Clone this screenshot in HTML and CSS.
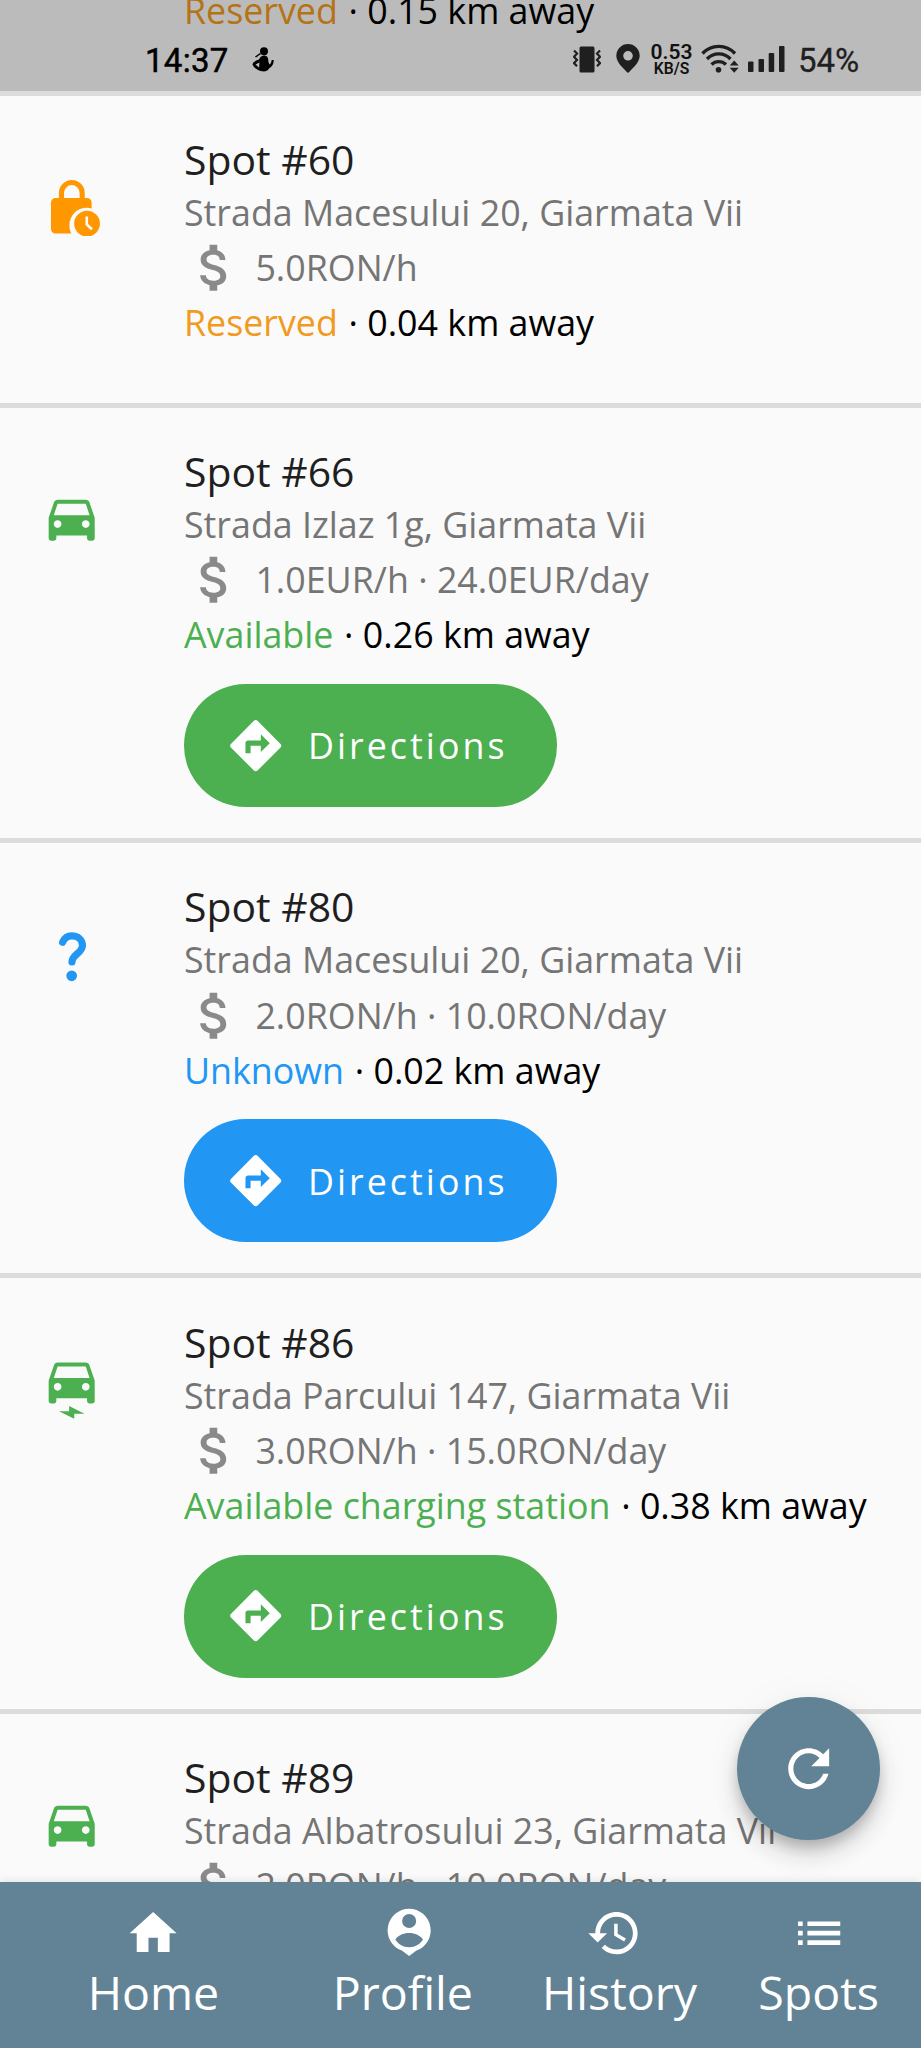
FILE: index.html
```html
<!DOCTYPE html>
<html lang="en">
<head>
<meta charset="utf-8">
<title>Parking spots</title>
<link rel="stylesheet" href="styles.css">
</head>
<body>
<svg class="defs" width="0" height="0" aria-hidden="true">
  <symbol id="car" viewBox="0 0 24 24"><path d="M18.92 6.01C18.72 5.42 18.16 5 17.5 5h-11c-.66 0-1.21.42-1.42 1.01L3 12v8c0 .55.45 1 1 1h1c.55 0 1-.45 1-1v-1h12v1c0 .55.45 1 1 1h1c.55 0 1-.45 1-1v-8l-2.08-5.99zM6.5 16c-.83 0-1.5-.67-1.5-1.5S5.67 13 6.5 13s1.5.67 1.5 1.5S7.33 16 6.5 16zm11 0c-.83 0-1.5-.67-1.5-1.5s.67-1.5 1.5-1.5 1.5.67 1.5 1.5-.67 1.5-1.5 1.5zM5 11l1.5-4.5h11L19 11H5z"/></symbol>
  <symbol id="ecar" viewBox="0 0 24 24"><path d="M18.92 2.01C18.72 1.42 18.16 1 17.5 1h-11c-.66 0-1.21.42-1.42 1.01L3 8v8c0 .55.45 1 1 1h1c.55 0 1-.45 1-1v-1h12v1c0 .55.45 1 1 1h1c.55 0 1-.45 1-1V8l-2.08-5.99zM6.5 12c-.83 0-1.5-.67-1.5-1.5S5.67 9 6.5 9 8 9.67 8 10.5 7.33 12 6.5 12zm11 0c-.83 0-1.5-.67-1.5-1.5S16.67 9 17.5 9s1.5.67 1.5 1.5-.67 1.5-1.5 1.5zM5 7l1.5-4.5h11L19 7H5zM7 20h4v-2l6 3h-4v2z"/></symbol>
  <symbol id="money" viewBox="0 0 24 24"><path d="M11.8 10.9c-2.27-.59-3-1.2-3-2.15 0-1.09 1.01-1.85 2.7-1.85 1.78 0 2.44.85 2.5 2.1h2.21c-.07-1.72-1.12-3.3-3.21-3.81V3h-3v2.16c-1.94.42-3.5 1.68-3.5 3.61 0 2.31 1.91 3.46 4.7 4.13 2.5.6 3 1.48 3 2.41 0 .69-.49 1.79-2.7 1.79-2.06 0-2.87-.92-2.98-2.1h-2.2c.12 2.19 1.76 3.42 3.68 3.83V21h3v-2.15c1.95-.37 3.5-1.5 3.5-3.55 0-2.84-2.43-3.81-4.7-4.4z"/></symbol>
  <symbol id="turn" viewBox="0 0 24 24"><path d="M21.71 11.29l-9-9c-.39-.39-1.02-.39-1.41 0l-9 9c-.39.39-.39 1.02 0 1.41l9 9c.39.39 1.02.39 1.41 0l9-9c.39-.38.39-1.01 0-1.41zM14 14.5V12h-4v3H8v-4c0-.55.45-1 1-1h5V7.5l3.5 3.5-3.5 3.5z"/></symbol>
</svg>

<main class="spots">
  <article class="spot spot-first">
    <div class="status"><span class="reserved">Reserved</span> · 0.15 km away</div>
  </article>

  <article class="spot spot-short">
    <svg class="spot-icon reserved" viewBox="0 0 24 24">
      <path fill-rule="evenodd" d="M19.8 13.1c-.7-.2-1.3-.3-1.9-.3a6.8 6.8 0 0 0-6.8 6.8c0 1.200.3 2.300.8 3.300H5.700a1.800 1.800 0 0 1-1.800-1.800V10.800A1.800 1.800 0 0 1 5.700 9h1.300V7a5.050 5.050 0 0 1 10.100 0v2h.9a1.800 1.800 0 0 1 1.800 1.800zM9 9h6.100V7A3.050 3.050 0 0 0 9 7z"/>
      <circle cx="18" cy="19" r="5.05"/>
      <path class="clock-hand" d="M17.900 16.200v3.100l2 1.900"/>
    </svg>
    <div class="info">
      <h2>Spot #60</h2>
      <p>Strada Macesului 20, Giarmata Vii</p>
      <p class="price"><svg><use href="#money"/></svg>5.0RON/h</p>
      <div class="status"><span class="reserved">Reserved</span> · 0.04 km away</div>
    </div>
  </article>

  <article class="spot">
    <svg class="spot-icon available"><use href="#car"/></svg>
    <div class="info">
      <h2>Spot #66</h2>
      <p>Strada Izlaz 1g, Giarmata Vii</p>
      <p class="price"><svg><use href="#money"/></svg>1.0EUR/h · 24.0EUR/day</p>
      <div class="status"><span class="available">Available</span> · 0.26 km away</div>
      <button class="go go-green"><svg><use href="#turn"/></svg>Directions</button>
    </div>
  </article>

  <article class="spot">
    <svg class="spot-icon unknown" viewBox="0 0 24 24">
      <path class="question" d="M8.450 7.900C9.200 6.300 10.400 5.450 12 5.450c2.500 0 4.200 1.500 4.200 3.700 0 3-4.100 3.500-4.100 6.500"/>
      <circle cx="12" cy="21.050" r="2.080"/>
    </svg>
    <div class="info">
      <h2>Spot #80</h2>
      <p>Strada Macesului 20, Giarmata Vii</p>
      <p class="price"><svg><use href="#money"/></svg>2.0RON/h · 10.0RON/day</p>
      <div class="status"><span class="unknown">Unknown</span> · 0.02 km away</div>
      <button class="go go-blue"><svg><use href="#turn"/></svg>Directions</button>
    </div>
  </article>

  <article class="spot">
    <svg class="spot-icon spot-icon-electric available"><use href="#ecar"/></svg>
    <div class="info">
      <h2>Spot #86</h2>
      <p>Strada Parcului 147, Giarmata Vii</p>
      <p class="price"><svg><use href="#money"/></svg>3.0RON/h · 15.0RON/day</p>
      <div class="status"><span class="available">Available charging station</span> · 0.38 km away</div>
      <button class="go go-green"><svg><use href="#turn"/></svg>Directions</button>
    </div>
  </article>

  <article class="spot spot-last">
    <svg class="spot-icon available"><use href="#car"/></svg>
    <div class="info">
      <h2>Spot #89</h2>
      <p>Strada Albatrosului 23, Giarmata Vii</p>
      <p class="price"><svg><use href="#money"/></svg>2.0RON/h · 10.0RON/day</p>
    </div>
  </article>
</main>

<header class="statusbar">
  <span class="time">14:37</span>
  <svg class="sb-figure" viewBox="0 0 22 25"><circle cx="12" cy="4.300" r="4"/><path d="M7 12.500C8 10 10 8.500 12.500 8.500c3 0 4.200 3 3.700 6l1.300 3c1.500-.7 1.800-2.500 2.200-4.500h2c.2 4-1.600 7-4.700 8.500-1.500 3-4.500 3.200-7 2.800C6 23.500 1.500 20.500.5 17.500c.5-2.500 3.500-4 6.500-5zM3.500 17.500l3.500 3 .5-5z" fill-rule="evenodd"/><path d="M3 9.500l5-3.500 1 1-5 3.500z"/></svg>
  <span class="sb-gap"></span>
  <svg class="sb-vibrate" viewBox="0 0 28 27"><rect x="6.500" y=".5" width="15" height="26" rx="1.500"/><path class="line" d="M1 4.500l3 3-3 3.200 3 3.200-3 3.200 3 3.200M27 4.500l-3 3 3 3.200-3 3.200 3 3.200-3 3.200"/></svg>
  <svg class="sb-pin" viewBox="0 0 24 29"><path fill-rule="evenodd" d="M12 0a11.700 11.700 0 0 1 11.700 11.700C23.700 18.500 16 25 12 29 8 25 .3 18.500.3 11.700A11.700 11.700 0 0 1 12 0zm0 7a4.800 4.800 0 1 0 0 9.600A4.800 4.800 0 0 0 12 7z"/></svg>
  <span class="rate"><b>0.53</b><i>KB/S</i></span>
  <svg class="sb-wifi" viewBox="0 0 38 29"><path class="line wave" d="M1.500 9.500a22 22 0 0 1 32.500 0M6 15a16 16 0 0 1 23.500 0M10.500 20.500a10.500 10.500 0 0 1 14.500 0"/><circle cx="17.500" cy="25.700" r="2.800"/><path d="M28.700 21.500h9l-4.500-5zM28.700 23.800h9l-4.500 5z"/></svg>
  <svg class="sb-signal" viewBox="0 0 37 26"><rect y="15.500" width="5.500" height="10.500" rx="1"/><rect x="10.500" y="13" width="5.500" height="13" rx="1"/><rect x="20.700" y="7" width="5.500" height="19" rx="1"/><rect x="31" width="5.500" height="26" rx="1"/></svg>
  <span class="battery">54%</span>
</header>

<button class="fab" aria-label="Refresh"><svg viewBox="0 0 24 24"><path d="M17.650 6.350C16.200 4.900 14.210 4 12 4c-4.420 0-7.990 3.580-7.990 8s3.570 8 7.990 8c3.730 0 6.840-2.550 7.730-6h-2.080c-.82 2.330-3.040 4-5.650 4-3.310 0-6-2.690-6-6s2.690-6 6-6c1.660 0 3.140.69 4.220 1.780L13 11h7V4l-2.350 2.350z"/></svg></button>

<nav class="tabs">
  <a class="tab"><svg viewBox="0 0 24 24"><path d="M10 20v-6h4v6h5v-8h3L12 3 2 12h3v8z"/></svg><span>Home</span></a>
  <a class="tab tab-profile"><svg viewBox="0 0 24 24"><path fill-rule="evenodd" d="M12 1.600a9.200 9.200 0 0 1 3.100 17.850L12 21.700l-3.100-2.250A9.200 9.200 0 0 1 12 1.600zm0 2.250a3 3 0 1 0 0 6 3 3 0 0 0 0-6zM6.100 14.700c1.100 1.900 3.300 3.300 5.900 3.300s4.800-1.400 5.900-3.300c-1.200-1.800-3.300-2.800-5.900-2.800s-4.700 1-5.900 2.800z"/></svg><span>Profile</span></a>
  <a class="tab tab-history"><svg viewBox="0 0 24 24"><path d="M13 3c-4.970 0-9 4.030-9 9H1l3.890 3.890.07.14L9 12H6c0-3.870 3.130-7 7-7s7 3.130 7 7-3.130 7-7 7c-1.930 0-3.680-.79-4.940-2.060l-1.420 1.420C8.270 19.990 10.510 21 13 21c4.970 0 9-4.030 9-9s-4.030-9-9-9zm-1 5v5l4.280 2.540.72-1.210-3.500-2.080V8H12z"/></svg><span>History</span></a>
  <a class="tab"><svg viewBox="0 0 24 24"><path d="M3 13h2v-2H3v2zm0 4h2v-2H3v2zm0-8h2V7H3v2zm4 4h14v-2H7v2zm0 4h14v-2H7v2zM7 7v2h14V7H7z"/></svg><span>Spots</span></a>
</nav>
</body>
</html>
```
FILE: styles.css
```css
* { box-sizing: border-box; }

body {
  margin: 0;
  height: 2048px;
  overflow: hidden;
  position: relative;
  display: flex;
  flex-direction: column;
  background: #fafafa;
  color: #000;
  font-family: "Open Sans", sans-serif;
  font-size: 35.8px;
}

svg { display: block; fill: currentColor; flex: none; }
.defs { position: absolute; }
button { border: 0; font: inherit; color: #fff; }

.reserved { color: #ff9800; }
.available { color: #4caf50; }
.unknown { color: #2196f3; }
.status .reserved { color: #f29a1f; }

/* Spot list */
.spots { height: 1882px; overflow: hidden; flex: none; }

.spot {
  display: flex;
  height: 435.33px;
  padding-left: 41px;
  border-bottom: 5px solid #dcdcdc;
}
.spot-first { height: 95.6px; padding-left: 184px; }
.spot-first .status { margin-top: -17px; }
.spot-short { height: 312px; }
.spot-last { border-bottom: 0; }

.spot-icon { width: 61.4px; height: 61.4px; margin-top: 79.5px; }
.spot-icon-electric { margin-top: 81.8px; }
.clock-hand { fill: none; stroke: #fafafa; stroke-width: 1; }
.question { fill: none; stroke: currentColor; stroke-width: 2.8; stroke-linecap: round; }

.info { margin-left: 81.6px; padding-top: 37.3px; white-space: nowrap; }
.info h2 {
  margin: 0;
  font-size: 40.9px;
  font-weight: 400;
  line-height: 52px;
  color: #1f1f1f;
}
.info p { margin: 0; line-height: 55px; color: #757575; }
.info h2 + p { line-height: 55.6px; }
.info .price { display: flex; align-items: center; height: 55px; }
.price svg { width: 61.4px; height: 61.4px; margin-right: 10px; color: #8a8a8a; }
.status { line-height: 55px; height: 55px; white-space: nowrap; }
.status span { margin-right: 1.4px; }

.go {
  display: flex;
  align-items: center;
  width: 373.5px;
  height: 123px;
  margin-top: 21.4px;
  padding: 0 0 0 41px;
  border-radius: 62px;
  letter-spacing: 3.05px;
}
.go svg { width: 61.4px; height: 61.4px; margin-right: 21.5px; }
.go-green { background: #4caf50; }
.go-blue { background: #2196f3; }

/* System status bar lies over the list */
.statusbar {
  position: absolute;
  inset: 0 0 auto 0;
  height: 91px;
  padding: 43.5px 63px 0 145px;
  display: flex;
  align-items: flex-start;
  background: rgba(0, 0, 0, .25);
  color: #1f1f1f;
  font-family: Roboto, sans-serif;
}
.time {
  width: 107px;
  font-size: 33px;
  line-height: 34px;
  letter-spacing: .3px;
  color: #000;
  -webkit-text-stroke: .5px #000;
}
.sb-figure { width: 22px; height: 25px; margin-top: 3.5px; color: #000; }
.sb-gap { flex: 1; }
.sb-vibrate { width: 28px; height: 27px; margin: 2px 15px 0 0; }
.sb-pin { width: 24px; height: 29px; margin: .5px 10px 0 0; }
.line { fill: none; stroke: currentColor; stroke-width: 2.2; }
.wave { stroke-width: 3.4; }
.rate { display: flex; flex-direction: column; align-items: center; width: 43px; margin-right: 8px; color: #111; }
.rate b { font-size: 21px; line-height: 17px; font-weight: 600; }
.rate i { font-size: 15.7px; line-height: 16px; font-style: normal; font-weight: 600; }
.sb-wifi { width: 38px; height: 29px; margin: .5px 9px 0 0; }
.sb-signal { width: 37px; height: 26px; margin: 2.5px 13px 0 0; }
.battery { width: 60px; font-size: 33px; line-height: 34px; -webkit-text-stroke: .3px #1f1f1f; }

/* Floating refresh button */
.fab {
  position: absolute;
  left: 737px;
  top: 1697px;
  width: 143px;
  height: 143px;
  padding: 0;
  display: grid;
  place-items: center;
  border-radius: 50%;
  background: #628395;
  box-shadow: 0 8px 13px -2px rgba(0, 0, 0, .2), 0 15px 25px rgba(0, 0, 0, .14), 0 2px 45px rgba(0, 0, 0, .04);
}
.fab svg { width: 61.4px; height: 61.4px; }

/* Bottom navigation */
.tabs {
  position: relative;
  height: 166px;
  flex: none;
  display: grid;
  grid-template-columns: 3fr 2fr 2fr 2fr;
  background: #628395;
  box-shadow: 0 -1px 8px rgba(0, 0, 0, .1);
  color: #fff;
}
.tab { display: flex; flex-direction: column; align-items: center; padding-top: 23.3px; font-size: 46.5px; }
.tab svg { width: 56.3px; height: 56.3px; }
.tab span { line-height: 60px; margin-top: .4px; }
.tab-profile span { padding-right: 13px; }
.tab-history span { padding-left: 11px; }
```
